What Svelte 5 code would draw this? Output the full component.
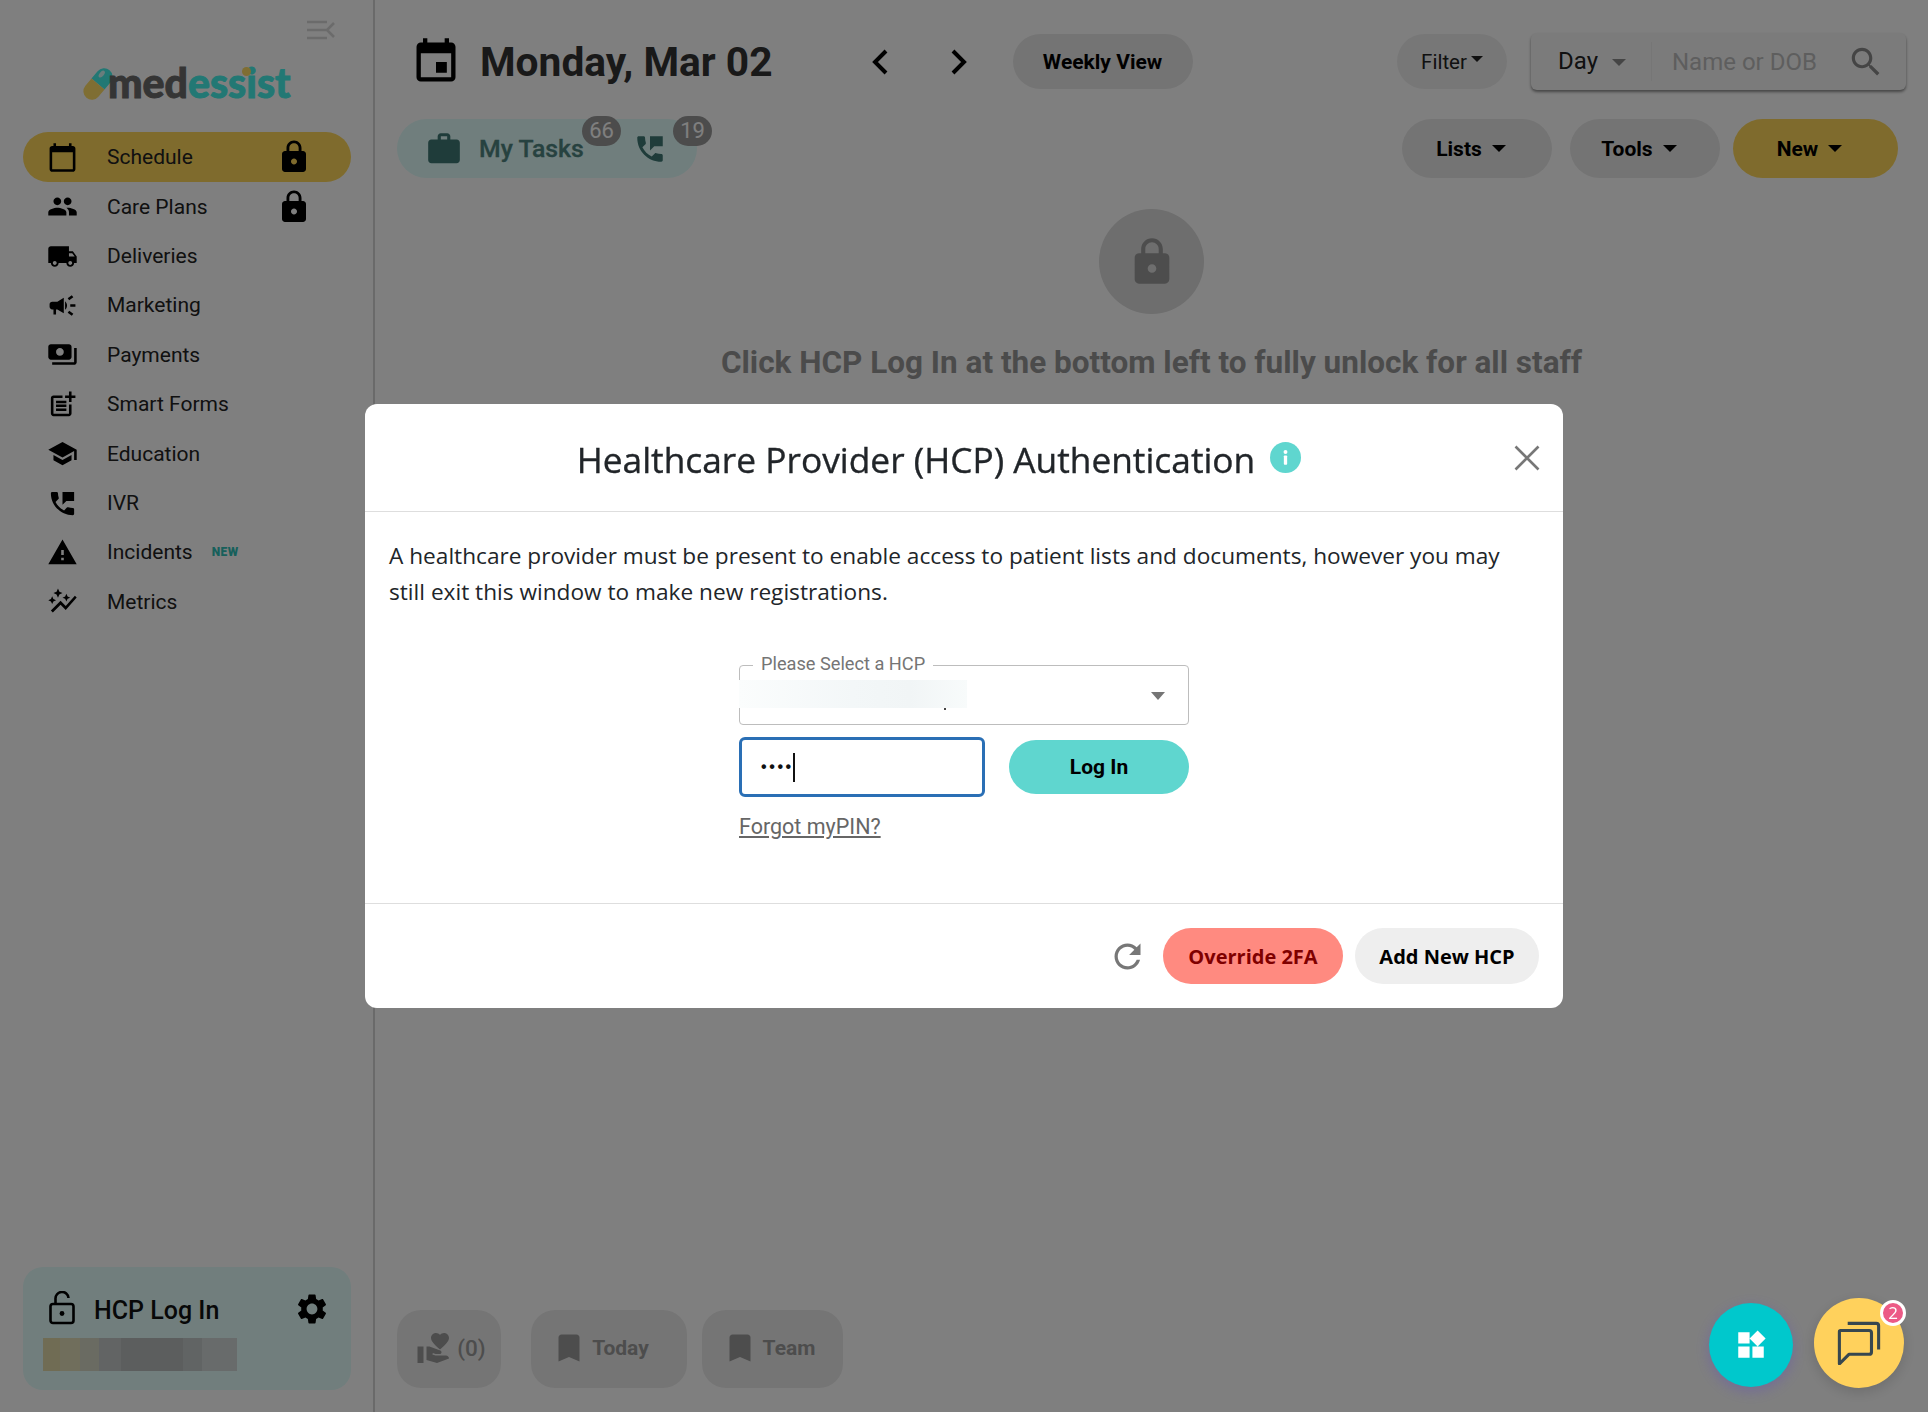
<script lang="ts">
  const icons: Record<string, string> = {
    calendar: 'M20 3h-1V1h-2v2H7V1H5v2H4c-1.1 0-2 .9-2 2v16c0 1.1.9 2 2 2h16c1.1 0 2-.9 2-2V5c0-1.1-.9-2-2-2zm0 18H4V8h16v13z',
    event: 'M17 12h-5v5h5v-5zM16 1v2H8V1H6v2H5c-1.11 0-1.99.9-1.99 2L3 19c0 1.1.89 2 2 2h14c1.1 0 2-.9 2-2V5c0-1.1-.9-2-2-2h-1V1h-2zm3 18H5V8h14v11z',
    lock: 'M18 8h-1V6c0-2.76-2.24-5-5-5S7 3.24 7 6v2H6c-1.1 0-2 .9-2 2v10c0 1.1.9 2 2 2h12c1.1 0 2-.9 2-2V10c0-1.1-.9-2-2-2zm-6 9c-1.1 0-2-.9-2-2s.9-2 2-2 2 .9 2 2-.9 2-2 2zm3.1-9H8.9V6c0-1.71 1.39-3.1 3.1-3.1 1.71 0 3.1 1.39 3.1 3.1v2z',
    people: 'M16 11c1.66 0 2.99-1.34 2.99-3S17.66 5 16 5c-1.66 0-3 1.34-3 3s1.34 3 3 3zm-8 0c1.66 0 2.99-1.34 2.99-3S9.66 5 8 5C6.34 5 5 6.34 5 8s1.34 3 3 3zm0 2c-2.33 0-7 1.17-7 3.5V19h14v-2.5c0-2.33-4.67-3.5-7-3.5zm8 0c-.29 0-.62.02-.97.05 1.16.84 1.97 1.97 1.97 3.45V19h6v-2.5c0-2.33-4.67-3.5-7-3.5z',
    truck: 'M20 8h-3V4H3c-1.1 0-2 .9-2 2v11h2c0 1.66 1.34 3 3 3s3-1.34 3-3h6c0 1.66 1.34 3 3 3s3-1.34 3-3h2v-5l-3-4zM6 18.5c-.83 0-1.5-.67-1.5-1.5s.67-1.5 1.5-1.5 1.5.67 1.5 1.5-.67 1.5-1.5 1.5zm13.5-9l1.96 2.5H17V9.5h2.5zm-1.5 9c-.83 0-1.5-.67-1.5-1.5s.67-1.5 1.5-1.5 1.5.67 1.5 1.5-.67 1.5-1.5 1.5z',
    campaign: 'M18 11v2h4v-2h-4zm-2 6.61c.96.71 2.21 1.65 3.2 2.39.4-.53.8-1.07 1.2-1.6-.99-.74-2.24-1.68-3.2-2.4-.4.54-.8 1.08-1.2 1.61zM20.4 5.6c-.4-.53-.8-1.07-1.2-1.6-.99.74-2.24 1.68-3.2 2.4.4.53.8 1.07 1.2 1.6.96-.72 2.21-1.65 3.2-2.4zM4 9c-1.1 0-2 .9-2 2v2c0 1.1.9 2 2 2h1v4h2v-4h1l5 3V6L8 9H4zm11.5 3c0-1.33-.58-2.53-1.5-3.35v6.69c.92-.81 1.5-2.01 1.5-3.34z',
    payments: 'M19 14V6c0-1.1-.9-2-2-2H3c-1.1 0-2 .9-2 2v8c0 1.1.9 2 2 2h14c1.1 0 2-.9 2-2zm-9-1c-1.66 0-3-1.34-3-3s1.34-3 3-3 3 1.34 3 3-1.34 3-3 3zm13-6v11c0 1.1-.9 2-2 2H4v-2h17V7h2z',
    postAdd: 'M17 19.22H5V7h7V5H5c-1.1 0-2 .9-2 2v12c0 1.1.9 2 2 2h12c1.1 0 2-.9 2-2v-7h-2v7.22zM19 2h-2v3h-3c.01.01 0 2 0 2h3v2.99c.01.01 2 0 2 0V7h3V5h-3V2zM7 9h8v2H7zM7 12v2h8v-2h-3zM7 15h8v2H7z',
    school: 'M5 13.18v4L12 21l7-3.82v-4L12 17l-7-3.82zM12 3L1 9l11 6 9-4.91V17h2V9L12 3z',
    phoneMsg: 'M20 15.5c-1.25 0-2.45-.2-3.57-.57-.35-.11-.74-.03-1.02.24l-2.2 2.2c-2.83-1.44-5.15-3.75-6.59-6.58l2.2-2.21c.28-.27.36-.66.25-1.01C8.7 6.45 8.5 5.25 8.5 4c0-.55-.45-1-1-1H4c-.55 0-1 .45-1 1 0 9.39 7.61 17 17 17 .55 0 1-.45 1-1v-3.5c0-.55-.45-1-1-1zM12 3v10l3-3h6V3h-9z',
    warning: 'M1 21h22L12 2 1 21zm12-3h-2v-2h2v2zm0-4h-2v-4h2v4z',
    graph: 'M14.06 9.94 12 9l2.06-.94L15 6l.94 2.06L18 9l-2.06.94L15 12zM4 14l.94-2.06L7 11l-2.06-.94L4 8l-.94 2.06L1 11l2.06.94zm4.5-5 1.09-2.41L12 5.5 9.59 4.41 8.5 2 7.41 4.41 5 5.5l2.41 1.09zm-4 11.5 6-6.01 4 4L23 8.93l-1.41-1.41-7.09 7.97-4-4L3 19z',
    work: 'M20 6h-4V4c0-1.11-.89-2-2-2h-4c-1.11 0-2 .89-2 2v2H4c-1.11 0-1.99.89-1.99 2L2 19c0 1.11.89 2 2 2h16c1.11 0 2-.89 2-2V8c0-1.11-.89-2-2-2zm-6 0h-4V4h4v2z',
    search: 'M15.5 14h-.79l-.28-.27C15.41 12.59 16 11.11 16 9.5 16 5.91 13.09 3 9.5 3S3 5.91 3 9.5 5.91 16 9.5 16c1.61 0 3.09-.59 4.23-1.57l.27.28v.79l5 4.99L20.49 19l-4.99-5zm-6 0C7.01 14 5 11.99 5 9.5S7.01 5 9.5 5 14 7.01 14 9.5 11.99 14 9.5 14z',
    gear: 'M19.14 12.94c.04-.3.06-.61.06-.94 0-.32-.02-.64-.07-.94l2.03-1.58c.18-.14.23-.41.12-.61l-1.92-3.32c-.12-.22-.37-.29-.59-.22l-2.39.96c-.5-.38-1.03-.7-1.62-.94l-.36-2.54c-.04-.24-.24-.41-.48-.41h-3.84c-.24 0-.43.17-.47.41l-.36 2.54c-.59.24-1.13.57-1.62.94l-2.39-.96c-.22-.08-.47 0-.59.22L2.74 8.87c-.12.21-.08.47.12.61l2.03 1.58c-.05.3-.09.63-.09.94s.02.64.07.94l-2.03 1.58c-.18.14-.23.41-.12.61l1.92 3.32c.12.22.37.29.59.22l2.39-.96c.5.38 1.03.7 1.62.94l.36 2.54c.05.24.24.41.48.41h3.84c.24 0 .44-.17.47-.41l.36-2.54c.59-.24 1.13-.56 1.62-.94l2.39.96c.22.08.47 0 .59-.22l1.92-3.32c.12-.22.07-.47-.12-.61l-2.01-1.58zM12 15.6c-1.98 0-3.6-1.62-3.6-3.6s1.62-3.6 3.6-3.6 3.6 1.62 3.6 3.6-1.62 3.6-3.6 3.6z',
    bookmark: 'M17 3H7c-1.1 0-1.99.9-1.99 2L5 21l7-3 7 3V5c0-1.1-.9-2-2-2z',
    care: 'M1 11h4v11H1zm15-7.75C16.65 2.49 17.66 2 18.7 2 20.55 2 22 3.45 22 5.3c0 2.27-2.91 4.9-6 7.7-3.09-2.81-6-5.44-6-7.7C10 3.45 11.45 2 13.3 2c1.04 0 2.05.49 2.7 1.25zM20 17h-7l-2.09-.73.33-.94L13 16h2.82c.65 0 1.18-.53 1.18-1.18 0-.49-.31-.93-.77-1.11L8.97 11H7v9.02L14 22l8.01-3c-.01-1.1-.9-2-2.01-2z',
    refresh: 'M17.65 6.35C16.2 4.9 14.21 4 12 4c-4.42 0-7.99 3.58-7.99 8s3.57 8 7.99 8c3.73 0 6.84-2.55 7.73-6h-2.08c-.82 2.33-3.04 4-5.65 4-3.31 0-6-2.69-6-6s2.69-6 6-6c1.66 0 3.14.69 4.22 1.78L13 11h7V4l-2.35 2.35z',
    widgets: 'M13 13v8h8v-8h-8zM3 21h8v-8H3v8zM3 3v8h8V3H3zm13.66-1.31L11 7.34 16.66 13l5.66-5.66-5.66-5.65z'
  };

  const navItems = [
    { label: 'Schedule', icon: 'calendar', active: true, locked: true },
    { label: 'Care Plans', icon: 'people', locked: true },
    { label: 'Deliveries', icon: 'truck' },
    { label: 'Marketing', icon: 'campaign' },
    { label: 'Payments', icon: 'payments' },
    { label: 'Smart Forms', icon: 'postAdd' },
    { label: 'Education', icon: 'school' },
    { label: 'IVR', icon: 'phoneMsg' },
    { label: 'Incidents', icon: 'warning', isNew: true },
    { label: 'Metrics', icon: 'graph' }
  ];

  const quickLinks = [
    { label: '(0)', icon: 'care', cls: 'care' },
    { label: 'Today', icon: 'bookmark', cls: 'today' },
    { label: 'Team', icon: 'bookmark', cls: 'team' }
  ];
</script>

{#snippet icon(name: string, size: number)}
  <svg class="icon" width={size} height={size} viewBox="0 0 24 24" fill="currentColor" aria-hidden="true"><path d={icons[name]} /></svg>
{/snippet}

{#snippet caret()}
  <span class="caret"></span>
{/snippet}

<div class="app">
  <aside class="sidebar">
    <div class="collapse-row">
      <svg width="28" height="20" viewBox="0 0 28 20" fill="none" stroke="currentColor" stroke-width="2.6">
        <path d="M0 2h20M0 10h20M0 18h20M27 3l-7 7 7 7" />
      </svg>
    </div>

    <div class="logo">
      <svg class="pill-mark" width="30" height="36" viewBox="0 0 30 36">
        <g transform="rotate(40 15 18)">
          <path d="M6.5 18V8.5a8.5 8.5 0 0 1 17 0V18z" fill="#45f0e8" />
          <path d="M6.5 18h17v9.500a8.500 8.500 0 0 1-17 0z" fill="#ffdc66" />
          <ellipse cx="11.500" cy="8" rx="2.200" ry="4" fill="#fff" opacity=".75" />
        </g>
      </svg>
      <span class="logo-text"><span class="med">med</span><span class="essist">essist</span><span class="i-dot"></span></span>
    </div>

    <nav class="nav">
      {#each navItems as item}
        <div class="nav-item" class:active={item.active}>
          <span class="nav-icon">{@render icon(item.icon, 31)}</span>
          <span class="nav-label">{item.label}</span>
          {#if item.isNew}<span class="new-tag">NEW</span>{/if}
          {#if item.locked}<span class="nav-lock">{@render icon('lock', 36)}</span>{/if}
        </div>
      {/each}
    </nav>

    <div class="hcp-card">
      <div class="hcp-top">
        <svg width="30" height="34" viewBox="0 0 30 34" fill="none" stroke="currentColor" stroke-width="2.6">
          <rect x="3.500" y="13" width="23" height="19" rx="2.500" />
          <path d="M8.500 13V8a6.500 6.500 0 0 1 13-1" />
          <circle cx="15" cy="22.500" r="2.400" fill="currentColor" stroke="none" />
        </svg>
        <span class="hcp-title">HCP Log In</span>
        <span class="hcp-gear">{@render icon('gear', 36)}</span>
      </div>
      <div class="hcp-name"></div>
    </div>
  </aside>

  <main class="main">
    <header class="row-one">
      <span class="date-icon">{@render icon('event', 52)}</span>
      <h1>Monday, Mar 02</h1>
      <div class="arrows">
        <svg width="20" height="26" viewBox="0 0 20 26" fill="none" stroke="currentColor" stroke-width="4"><path d="M16 2L5 13l11 11" /></svg>
        <svg width="20" height="26" viewBox="0 0 20 26" fill="none" stroke="currentColor" stroke-width="4"><path d="M4 2l11 11L4 24" /></svg>
      </div>
      <button class="pill weekly">Weekly View</button>
      <div class="spacer"></div>
      <button class="pill filter">Filter<span class="caret small"></span></button>
      <div class="search">
        <span class="search-day">Day {@render caret()}</span>
        <span class="search-input">Name or DOB</span>
        {@render icon('search', 38)}
      </div>
    </header>

    <div class="row-two">
      <div class="tasks">
        {@render icon('work', 38)}
        <span class="tasks-label">My Tasks</span>
        <span class="count c66">66</span>
        <span class="tasks-phone">{@render icon('phoneMsg', 34)}</span>
        <span class="count c19">19</span>
      </div>
      <div class="spacer"></div>
      <button class="pill big lists">Lists {@render caret()}</button>
      <button class="pill big tools">Tools {@render caret()}</button>
      <button class="pill big new">New {@render caret()}</button>
    </div>

    <div class="locked">
      <div class="lock-circle">{@render icon('lock', 52)}</div>
      <p>Click HCP Log In at the bottom left to fully unlock for all staff</p>
    </div>

    <div class="quick">
      {#each quickLinks as q}
        <button class="quick-btn {q.cls}">{@render icon(q.icon, 36)}<span>{q.label}</span></button>
      {/each}
    </div>
  </main>
</div>

<div class="backdrop">
  <div class="modal">
    <div class="modal-head">
      <h2>Healthcare Provider (HCP) Authentication</h2>
      <svg class="info" width="31" height="31" viewBox="0 0 30 30">
        <circle cx="15" cy="15" r="15" fill="#5fd6cf" />
        <rect x="13.400" y="13" width="3.200" height="9" rx=".8" fill="#fff" />
        <circle cx="15" cy="9.600" r="1.900" fill="#fff" />
      </svg>
      <svg class="close" width="26" height="26" viewBox="0 0 26 26" fill="none" stroke="#777" stroke-width="2.6"><path d="M1.500 1.500l23 23M24.500 1.500l-23 23" /></svg>
    </div>

    <div class="modal-body">
      <p>A healthcare provider must be present to enable access to patient lists and documents, however you may still exit this window to make new registrations.</p>

      <div class="form">
        <div class="select">
          <span class="select-label">Please Select a HCP</span>
          <div class="blurred"></div>
          <span class="select-caret"></span>
        </div>
        <div class="pin-row">
          <div class="pin"><span class="dots">••••</span><span class="cursor"></span></div>
          <button class="login">Log In</button>
        </div>
        <span class="forgot">Forgot myPIN?</span>
      </div>
    </div>

    <div class="modal-foot">
      <span class="refresh">{@render icon('refresh', 39)}</span>
      <button class="foot-btn override">Override 2FA</button>
      <button class="foot-btn add">Add New HCP</button>
    </div>
  </div>
</div>

<button class="fab apps">{@render icon('widgets', 34)}</button>
<button class="fab chat">
  <svg width="44" height="44" viewBox="3 1 37 37" fill="none" stroke="#37474f" stroke-width="2.6" stroke-linejoin="round">
    <path d="M12 3h24a2 2 0 0 1 2 2v20" />
    <path d="M6 9h24a2 2 0 0 1 2 2v16a2 2 0 0 1-2 2H13l-8 8V10a1 1 0 0 1 1-1z" />
  </svg>
  <span class="chat-badge">2</span>
</button>

<style>
  :global(body) {
    margin: 0;
    font-family: Roboto, "Liberation Sans", sans-serif;
    background: #fff;
    overflow: hidden;
  }

  button {
    border: 0;
    font: inherit;
    color: inherit;
    cursor: pointer;
  }

  .icon {
    display: block;
    flex: none;
  }

  .app {
    display: grid;
    grid-template-columns: 375px 1fr;
    height: 1412px;
  }

  .sidebar {
    display: flex;
    flex-direction: column;
    border-right: 2px solid #d4d4d4;
    padding: 20px 22px 22px 23px;
    box-sizing: border-box;
    height: 1412px;
  }

  .collapse-row {
    display: flex;
    justify-content: flex-end;
    padding-right: 16px;
    color: #d6d6d6;
    height: 20px;
  }

  .logo {
    display: flex;
    align-items: flex-end;
    margin: 24px 0 0 60px;
    height: 38px;
  }

  .pill-mark {
    flex: none;
    overflow: visible;
  }

  .logo-text {
    position: relative;
    font-family: Lato, sans-serif;
    font-weight: 900;
    font-size: 41px;
    line-height: 38px;
    margin-left: -5px;
    -webkit-text-stroke: 0.9px currentColor;
  }

  .med {
    color: #6a6a6a;
  }

  .essist {
    color: #45f0e8;
  }

  .i-dot {
    position: absolute;
    left: 134px;
    top: 3px;
    width: 9px;
    height: 9px;
    border-radius: 50%;
    background: #ffdc66;
  }

  .nav {
    display: flex;
    flex-direction: column;
    margin-top: 30px;
  }

  .nav-item {
    display: flex;
    align-items: center;
    height: 49.4px;
    padding-left: 23px;
    border-radius: 25px;
    font-size: 21px;
    color: #222;
  }

  .nav-item.active {
    background: #ffd75a;
    height: 50px;
  }

  .nav-icon {
    width: 61px;
    color: #000;
  }

  .nav-icon .icon {
    margin-left: 1px;
  }

  .nav-lock {
    margin-left: auto;
    margin-right: 39px;
    color: #000;
  }

  .new-tag {
    margin-left: 19px;
    font-size: 12px;
    font-weight: 900;
    color: #2fc0b6;
    letter-spacing: 0.4px;
  }

  .hcp-card {
    margin-top: auto;
    height: 123px;
    box-sizing: border-box;
    background: #e2fdfb;
    border-radius: 20px;
    padding: 21px 20px 0;
  }

  .hcp-top {
    display: flex;
    align-items: center;
    color: #000;
    margin-left: 4px;
  }

  .hcp-title {
    font-size: 25px;
    font-weight: 500;
    margin-left: 17px;
    padding-top: 6px;
    color: #111;
  }

  .hcp-gear {
    margin-left: auto;
    margin-right: 1px;
    padding-top: 3px;
  }

  .hcp-name {
    width: 194px;
    height: 33px;
    margin-top: 11px;
    background: linear-gradient(90deg, #e0d9a8 0 9%, #e0dcb8 9% 19%, #d4d6c4 19% 29%, #c4c8c8 29% 40%, #b8bcbc 40% 72%, #c2c8c8 72% 82%, #d0d6d6 82% 100%);
  }

  .main {
    display: flex;
    flex-direction: column;
    padding: 33px 22px 24px 22px;
    box-sizing: border-box;
    height: 1412px;
    min-width: 0;
  }

  .spacer {
    flex: 1;
  }

  .row-one {
    display: flex;
    align-items: center;
    height: 57px;
  }

  .date-icon {
    color: #000;
    margin-left: 13px;
  }

  h1 {
    margin: 0 0 0 18px;
    font-size: 40.700px;
    font-weight: 700;
    color: #333;
    white-space: nowrap;
  }

  .arrows {
    display: flex;
    gap: 59px;
    margin-left: 97px;
    color: #000;
  }

  .pill {
    height: 55px;
    border-radius: 28px;
    background: #e9e9e9;
    font-size: 21px;
    font-weight: 700;
    color: #000;
    padding: 0;
    display: flex;
    align-items: center;
    justify-content: center;
  }

  .weekly {
    width: 180px;
    margin-left: 44px;
  }

  .filter {
    width: 110px;
    font-weight: 400;
    color: #222;
    font-size: 20.500px;
    background: #efefef;
  }

  .caret {
    display: inline-block;
    border: 7px solid transparent;
    border-top-color: currentColor;
    border-bottom-width: 0;
    margin-left: 10px;
  }

  .caret.small {
    border-width: 6px 6px 0;
    margin: -6px 0 0 4px;
  }

  .search {
    width: 375px;
    height: 57px;
    margin: 0 0 0 24px;
    display: flex;
    align-items: center;
    box-sizing: border-box;
    border-radius: 6px;
    background: #f7f7f7;
    box-shadow: 0 2px 3px rgba(0, 0, 0, 0.45);
    color: #222;
    font-size: 24px;
  }

  .search-day {
    width: 121px;
    box-sizing: border-box;
    padding-left: 27px;
    border-right: 1px solid #ececec;
    height: 39px;
    line-height: 39px;
    white-space: nowrap;
  }

  .search-day .caret {
    color: #8a8a8a;
    margin-left: 8px;
    vertical-align: middle;
  }

  .search-input {
    flex: 1;
    padding-left: 20px;
    color: #bdbdbd;
  }

  .search .icon {
    color: #8a8a8a;
    margin-right: 21px;
  }

  .row-two {
    display: flex;
    align-items: center;
    margin-top: 29px;
    height: 59px;
  }

  .tasks {
    width: 300px;
    height: 59px;
    border-radius: 30px;
    background: #e0fdfb;
    position: relative;
    display: flex;
    align-items: center;
    padding-left: 28px;
    box-sizing: border-box;
    color: #3f7874;
  }

  .tasks-label {
    margin-left: 16px;
    font-size: 24.800px;
    font-weight: 500;
    color: #4f8480;
    -webkit-text-stroke: 0.3px currentColor;
  }

  .tasks-phone {
    margin-left: 49px;
  }

  .count {
    position: absolute;
    top: -3px;
    width: 39px;
    height: 30px;
    border-radius: 15px;
    background: #999;
    color: #fff;
    font-size: 22px;
    line-height: 30px;
    text-align: center;
  }

  .c66 {
    left: 185px;
  }

  .c19 {
    left: 276px;
  }

  .big {
    height: 59px;
    border-radius: 30px;
    width: 150px;
    box-sizing: border-box;
    padding-right: 12px;
    font-size: 21px;
    background: #e9e9e9;
  }

  .lists {
    margin-right: 18px;
  }

  .tools {
    margin-right: 13px;
  }

  .new {
    width: 165px;
    margin-right: 8px;
    background: #ffd75a;
  }

  .locked {
    display: flex;
    flex-direction: column;
    align-items: center;
    margin-top: 31px;
  }

  .lock-circle {
    width: 105px;
    height: 105px;
    border-radius: 50%;
    background: #dcdcdc;
    color: #9a9a9a;
    display: flex;
    align-items: center;
    justify-content: center;
  }

  .locked p {
    margin: 30px 0 0;
    font-size: 31.500px;
    font-weight: 700;
    line-height: 38px;
    color: #979797;
  }

  .quick {
    margin-top: auto;
    display: flex;
    gap: 15px;
  }

  .quick-btn {
    height: 78px;
    box-sizing: border-box;
    border-radius: 24px;
    background: #ebebeb;
    color: #9a9a9a;
    font-size: 21px;
    font-weight: 700;
    display: flex;
    align-items: center;
    justify-content: center;
    gap: 5px;
    padding: 0 0 3px;
  }

  .quick-btn.care {
    width: 104px;
    margin-right: 15px;
    padding-left: 4px;
    font-size: 22.500px;
    font-weight: 500;
  }

  .quick-btn.today {
    width: 156px;
    padding-right: 18px;
  }

  .quick-btn.team {
    width: 141px;
    padding-right: 8px;
  }

  .backdrop {
    position: fixed;
    inset: 0;
    background: rgba(0, 0, 0, 0.5);
    display: flex;
    align-items: center;
    justify-content: center;
  }

  .modal {
    width: 1198px;
    height: 604px;
    background: #fff;
    border-radius: 12px;
    display: flex;
    flex-direction: column;
    font-family: "Open Sans", "Noto Sans", sans-serif;
  }

  .modal-head {
    height: 108px;
    flex: none;
    border-bottom: 1px solid #dedede;
    display: flex;
    align-items: center;
    justify-content: center;
    position: relative;
    box-sizing: border-box;
    padding-right: 50px;
  }

  h2 {
    margin: 3px 0 0;
    font-size: 35.300px;
    font-weight: 400;
    color: #212529;
    white-space: nowrap;
    -webkit-text-stroke: 0.35px currentColor;
  }

  .info {
    margin-left: 15px;
    margin-bottom: 1px;
  }

  .close {
    position: absolute;
    right: 23px;
    top: 41px;
  }

  .modal-body {
    flex: 1;
    padding: 26px 24px 0;
  }

  .modal-body p {
    margin: 0;
    font-size: 22.650px;
    line-height: 36px;
    color: #212529;
  }

  .form {
    width: 450px;
    margin: 55px 0 0 350px;
    font-family: Roboto, sans-serif;
  }

  .select {
    position: relative;
    height: 60px;
    border: 1px solid #bdbdbd;
    border-radius: 4px;
    box-sizing: border-box;
  }

  .select-label {
    position: absolute;
    left: 13px;
    top: -12px;
    padding: 0 8px;
    background: #fff;
    font-size: 18.200px;
    line-height: 20px;
    color: #757575;
  }

  .blurred {
    position: absolute;
    left: -1px;
    top: 14px;
    width: 228px;
    height: 28px;
    background: linear-gradient(90deg, #fbfdfd, #f3f7f8 50%, #f1f5f6 75%, #f8fbfb);
  }

  .blurred::after {
    content: "";
    position: absolute;
    left: 205px;
    bottom: -2px;
    width: 2px;
    height: 2px;
    background: #444;
  }

  .select-caret {
    position: absolute;
    right: 23px;
    top: 26px;
    border: 7.500px solid transparent;
    border-top: 8px solid #757575;
    border-bottom-width: 0;
  }

  .pin-row {
    display: flex;
    align-items: center;
    justify-content: space-between;
    margin-top: 12px;
  }

  .pin {
    width: 246px;
    height: 60px;
    box-sizing: border-box;
    border: 3px solid #2a6fb5;
    border-radius: 6px;
    display: flex;
    align-items: center;
    padding-left: 19px;
  }

  .dots {
    font-family: "Liberation Sans", sans-serif;
    font-size: 16px;
    letter-spacing: 2.600px;
    color: #111;
    font-weight: 700;
  }

  .cursor {
    width: 2px;
    height: 29px;
    background: #111;
    margin-left: -1px;
  }

  .login {
    width: 180px;
    height: 54px;
    border-radius: 27px;
    background: #5fd6cf;
    font-size: 21px;
    font-weight: 700;
    color: #000;
  }

  .forgot {
    display: inline-block;
    margin-top: 17px;
    font-size: 21.500px;
    line-height: 26px;
    color: #666;
    text-decoration: underline;
  }

  .modal-foot {
    height: 105px;
    flex: none;
    border-top: 1px solid #dedede;
    display: flex;
    align-items: center;
    justify-content: flex-end;
    padding-right: 24px;
    box-sizing: border-box;
    gap: 12px;
  }

  .refresh {
    color: #777;
    margin-right: 4px;
  }

  .foot-btn {
    height: 56px;
    border-radius: 28px;
    font-size: 20px;
    font-weight: 700;
    font-family: "Open Sans", sans-serif;
  }

  .override {
    width: 180px;
    background: #ff8a80;
    color: #7f0000;
  }

  .add {
    width: 184px;
    background: #eee;
    color: #000;
  }

  .fab {
    position: fixed;
    border-radius: 50%;
    display: flex;
    align-items: center;
    justify-content: center;
    padding: 0;
  }

  .apps {
    left: 1709px;
    top: 1303px;
    width: 84px;
    height: 84px;
    background: #00c8cc;
    color: #fff;
    box-shadow: 0 4px 14px rgba(90, 70, 200, 0.35);
  }

  .chat {
    left: 1814px;
    top: 1298px;
    width: 90px;
    height: 90px;
    background: #ffd15c;
    box-shadow: 0 4px 14px rgba(0, 0, 0, 0.15);
  }

  .chat-badge {
    position: absolute;
    left: 66px;
    top: 2px;
    width: 20px;
    height: 20px;
    border: 3px solid #fff;
    border-radius: 50%;
    background: #ec5a86;
    color: #fff;
    font-size: 17px;
    line-height: 20px;
    text-align: center;
    font-family: "Open Sans", sans-serif;
  }
</style>
